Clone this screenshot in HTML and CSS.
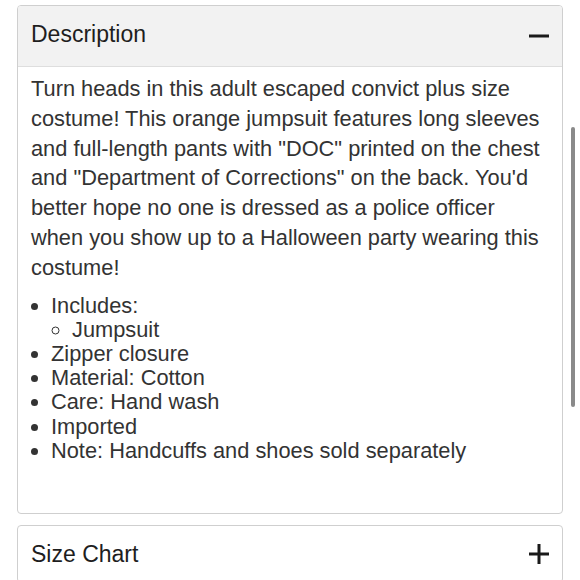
FILE: index.html
```html
<!DOCTYPE html>
<html>
<head>
<meta charset="utf-8">
<link rel="stylesheet" href="styles.css">
</head>
<body>
<div class="page">
  <section class="card open">
    <div class="card-head">
      <span class="title">Description</span>
      <svg class="icon" width="20" height="20" viewBox="0 0 20 20"><rect x="0" y="8.5" width="20" height="3" fill="#1a1a1a"/></svg>
    </div>
    <div class="card-body">
      <p class="desc">Turn heads in this adult escaped convict plus size costume! This orange jumpsuit features long sleeves and full-length pants with "DOC" printed on the chest and "Department of Corrections" on the back. You'd better hope no one is dressed as a police officer when you show up to a Halloween party wearing this costume!</p>
      <ul class="list">
        <li>Includes:
          <ul class="sub">
            <li>Jumpsuit</li>
          </ul>
        </li>
        <li>Zipper closure</li>
        <li>Material: Cotton</li>
        <li>Care: Hand wash</li>
        <li>Imported</li>
        <li>Note: Handcuffs and shoes sold separately</li>
      </ul>
    </div>
  </section>
  <section class="card closed">
    <div class="card-head">
      <span class="title">Size Chart</span>
      <svg class="icon" width="20" height="20" viewBox="0 0 20 20"><rect x="0" y="8.5" width="20" height="3" fill="#1a1a1a"/><rect x="8.5" y="0" width="3" height="20" fill="#1a1a1a"/></svg>
    </div>
  </section>
</div>
<div class="scrollbar"></div>
</body>
</html>
```
FILE: styles.css
```css
html, body {
  margin: 0;
  padding: 0;
  background: #ffffff;
  overflow: hidden;
}
body {
  font-family: "Liberation Sans", Arial, sans-serif;
  color: #333333;
}
.page {
  padding: 5px 17px 0 17px;
  display: flex;
  flex-direction: column;
  gap: 11px;
}
.card {
  border: 1px solid #cfcfcf;
  border-radius: 4px;
  background: #ffffff;
  overflow: hidden;
}
.card-head {
  height: 60px;
  padding: 0 13px 0 13px;
  display: flex;
  align-items: center;
  justify-content: space-between;
}
.open .card-head {
  background: #f2f2f2;
  border-bottom: 1px solid #dedede;
}
.open .card-head .title {
  margin-top: -3px;
}
.closed .card-head {
  height: 56px;
}
.title {
  font-size: 23px;
  color: #1e1e1e;
}
.icon {
  display: block;
}
.card-body {
  padding: 7px 13px 50px 13px;
}
.desc {
  margin: 0;
  font-size: 21.8px;
  line-height: 29.8px;
}
.list {
  margin: 11px 0 0 0;
  padding-left: 20px;
  font-size: 21.8px;
  line-height: 24.2px;
}
.sub {
  margin: 0;
  padding-left: 21px;
  list-style-type: circle;
}
.scrollbar {
  position: fixed;
  left: 571px;
  top: 127px;
  width: 4px;
  height: 280px;
  border-radius: 2px;
  background: #8a8a8a;
}
```
